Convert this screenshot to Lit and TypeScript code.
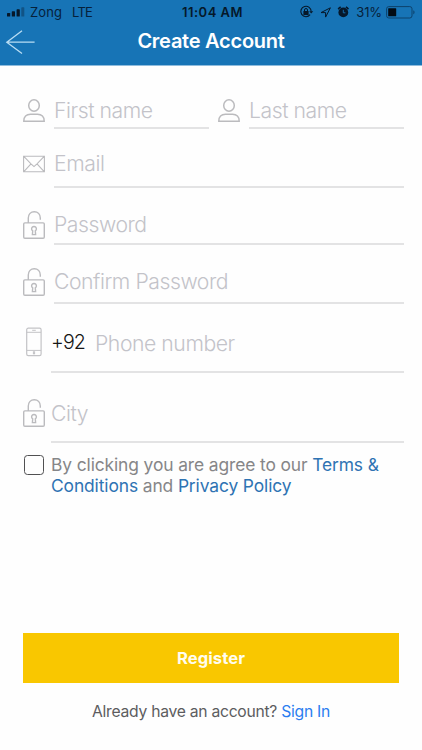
import { LitElement, html, css, svg } from "lit";
import { customElement, property } from "lit/decorators.js";

const icons: Record<string, unknown> = {
  person: svg`<svg width="24" height="24" viewBox="0 0 24 24" fill="none" stroke="#bbbbbe" stroke-width="1.5"><ellipse cx="12" cy="6.5" rx="5.3" ry="5.7"/><path d="M1.8 22.2C1.5 17.5 4.5 15.2 8.5 15.2H15.5C19.5 15.2 22.5 17.5 22.2 22.2Z"/></svg>`,
  mail: svg`<svg width="24" height="18" viewBox="0 0 24 18" fill="none" stroke="#bbbbbe" stroke-width="1.1"><path d="M1.6 1.2H22.4V16.8H1.6ZM1.6 1.2L9 8.8 12 11.6 15 8.8 22.4 1.2M1.6 16.8L9 8.8M22.4 16.8L15 8.8"/></svg>`,
  lock: svg`<svg width="24" height="30" viewBox="0 0 24 30" fill="none" stroke="#bbbbbe" stroke-width="1.4"><rect x="1.7" y="12.9" width="20.6" height="15.3" rx="1.2"/><path d="M6.3 12.9V8C6.3 4.4 8.8 1.7 12.3 1.7S18.3 4.4 18.3 8V9.7"/><path d="M10.7 20.9A2.4 2.4 0 1 1 13.3 20.9L13.6 24.6H10.4Z"/></svg>`,
  phone: svg`<svg width="24" height="30" viewBox="0 0 24 30" fill="none" stroke="#c3c3c6" stroke-width="1.2"><rect x="4.7" y="1.2" width="14.4" height="27.4" rx="1.6"/><path d="M4.7 5.3H19.1M4.7 23.4H19.1M10.2 3.3H13.8" stroke-width="1"/><rect x="11.4" y="24.8" width="1.2" height="2" stroke-width="1"/></svg>`,
};

@customElement("form-field")
class FormField extends LitElement {
  @property() icon = "person";
  @property() label = "";
  @property() prefixText = "";
  static styles = css`
    :host { display: flex; align-items: flex-end; }
    .icon { flex: none; width: 24px; margin-left: 22px; padding-bottom: var(--icon-gap, 6px); }
    .icon svg { display: block; }
    .field { flex: 1; margin-left: var(--gap, 8px); border-bottom: 2px solid #e3e3e4; padding-bottom: var(--text-gap, 5px);
      display: flex; line-height: 24px; white-space: nowrap; }
    .label { font-size: 21.2px; font-weight: 300; color: #c3c3c9; letter-spacing: -0.45px; }
    .prefix { width: 44px; font-size: 19.6px; color: #161616; font-weight: 350; letter-spacing: -0.9px; position: relative; top: -1px; }
  `;
  render() {
    return html`<div class="icon">${icons[this.icon]}</div>
      <div class="field">${this.prefixText ? html`<span class="prefix">${this.prefixText}</span>` : ""}<span class="label">${this.label}</span></div>`;
  }
}

@customElement("app-root")
class AppRoot extends LitElement {
  static styles = css`
    :host { display: flex; flex-direction: column; width: 422px; height: 750px; background: #fefefe; overflow: hidden;
      font-family: Inter, "Liberation Sans", sans-serif; }
    header { height: 66px; box-sizing: border-box; background: #1774b6; border-bottom: 1px solid #8fbcdd; flex: none; }
    .status { height: 24px; display: grid; grid-template-columns: 1fr auto 1fr; align-items: center; font-size: 13px; line-height: 24px; color: #06213a; }
    .left, .right { display: flex; align-items: center; }
    .left { padding-left: 7px; }
    .right { justify-content: flex-end; padding-right: 6px; }
    .signal { margin-right: 5px; }
    .carrier { width: 42px; letter-spacing: 0.1px; }
    .lte { letter-spacing: -0.7px; }
    .time { font-weight: 600; color: #05182a; letter-spacing: 0.5px; margin-left: 3px; }
    .pct { margin: 0 4px 0 5px; letter-spacing: -0.1px; }
    .bar { height: 38px; display: grid; grid-template-columns: 42px 1fr 42px; align-items: center; }
    .back { margin-left: 5px; display: block; margin-top: -2px; }
    h1 { margin: -4px 0 0; text-align: center; font-size: 20px; line-height: 24px; font-weight: 600; color: #fff; letter-spacing: -0.25px; }
    .form { display: flex; flex-direction: column; padding-right: 18px; flex: none; }
    .names { display: grid; grid-template-columns: 209px 195px; height: 63px; }
    .names form-field + form-field { margin-left: -14px; }
    .email { height: 59px; --icon-gap: 15px; --text-gap: 11px; }
    .pass { height: 57px; --icon-gap: 5px; --text-gap: 7px; }
    .confirm { height: 59px; --icon-gap: 7px; --text-gap: 9px; }
    .tel { height: 69px; --icon-gap: 16px; --text-gap: 16px; --gap: 5px; }
    .city { height: 70px; --icon-gap: 15px; --text-gap: 16px; --gap: 5px; }
    .terms { display: flex; margin: 11px 0 0 24px; height: 44px; flex: none; }
    .box { width: 20px; height: 20px; box-sizing: border-box; border: 1.5px solid #505052; border-radius: 3.5px; margin: 1px 7px 0 0; flex: none; }
    .copy { font-size: 17.4px; line-height: 21px; color: #868688; white-space: nowrap; letter-spacing: -0.11px; }
    .copy .link { color: #2e73b3; }
    .register { margin: 135px 23px 0; height: 50px; flex: none; border: 0; padding: 1px 0 0; background: #f9c700; color: #fffdf0;
      font: 700 16.6px/49px Inter, "Liberation Sans", sans-serif; letter-spacing: 0.1px; text-align: center; }
    .signin { margin-top: 18px; text-align: center; font-size: 15.7px; line-height: 22px; color: #5c5c5e; letter-spacing: -0.27px; }
    .signin .link { color: #2a7df0; }
  `;
  render() {
    return html`
      <header>
        <div class="status">
          <div class="left">
            <svg class="signal" width="18" height="10" viewBox="0 0 18 10" fill="#06182a"><rect y="6" width="3.2" height="3.5" rx=".6"/><rect x="4.8" y="4.3" width="3.2" height="5.2" rx=".6"/><rect x="9.6" y="2.3" width="3.2" height="7.2" rx=".6"/><rect x="14.3" y=".3" width="3" height="9.2" rx=".6" opacity=".35"/></svg>
            <span class="carrier">Zong</span><span class="lte">LTE</span>
          </div>
          <span class="time">11:04 AM</span>
          <div class="right">
            <svg width="56" height="16" viewBox="0 0 56 16" fill="none" stroke="#06182a">
              <path d="M15.1 10.7A5.2 5.2 0 1 1 16.2 7.6" stroke-width="1.1"/><path d="M14.2 7.2H18.2L16.2 9.5Z" fill="#06182a" stroke="none"/>
              <rect x="8.4" y="7" width="5.2" height="3.9" rx=".5" fill="#06182a" stroke="none"/><path d="M9.5 7V6A1.5 1.5 0 0 1 12.5 6V7" stroke-width="1"/>
              <path d="M26 8.6L35.4 3.8L30.6 13.1V8.6Z" stroke-width="1"/>
              <circle cx="48.3" cy="8.4" r="4.9" fill="#06182a" stroke="none"/><path d="M43.2 5.2A7 7 0 0 1 45.7 3M50.9 3A7 7 0 0 1 53.4 5.2" stroke-width="1.5"/><path d="M48.3 5.8V8.8H50.4" stroke="#1774b6" stroke-width=".9"/>
            </svg>
            <span class="pct">31%</span>
            <svg width="30" height="13" viewBox="0 0 30 13"><rect x=".6" y=".6" width="25.4" height="11.4" rx="2.2" fill="none" stroke="#0d426c" stroke-width="1"/><rect x="2.2" y="2.3" width="8" height="8" rx=".5" fill="#020b14"/><path d="M27.3 4.2C29 4.8 29 7.8 27.3 8.4Z" fill="#0d426c"/></svg>
          </div>
        </div>
        <div class="bar">
          <svg class="back" width="31" height="26" viewBox="0 0 31 26" fill="none" stroke="#b9ddf3" stroke-width="1.3"><path d="M29.6 13.2H1.8M17 1.8L1.8 13.2L17 24.5"/></svg>
          <h1>Create Account</h1>
        </div>
      </header>
      <div class="form">
        <div class="names">
          <form-field icon="person" label="First name"></form-field>
          <form-field icon="person" label="Last name"></form-field>
        </div>
        <form-field class="email" icon="mail" label="Email"></form-field>
        <form-field class="pass" icon="lock" label="Password"></form-field>
        <form-field class="confirm" icon="lock" label="Confirm Password"></form-field>
        <form-field class="tel" icon="phone" prefixText="+92" label="Phone number"></form-field>
        <form-field class="city" icon="lock" label="City"></form-field>
      </div>
      <div class="terms">
        <div class="box"></div>
        <div class="copy">By clicking you are agree to our <span class="link">Terms &amp;</span><br><span class="link">Conditions</span> and <span class="link">Privacy Policy</span></div>
      </div>
      <button class="register">Register</button>
      <div class="signin">Already have an account? <span class="link">Sign In</span></div>
    `;
  }
}
